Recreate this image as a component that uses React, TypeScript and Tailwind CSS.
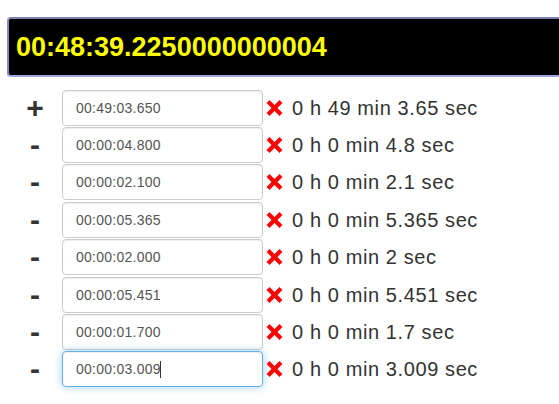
import React from 'react';

const laps = [
  { sign: '+', value: '00:49:03.650', label: '0 h 49 min 3.65 sec' },
  { sign: '-', value: '00:00:04.800', label: '0 h 0 min 4.8 sec' },
  { sign: '-', value: '00:00:02.100', label: '0 h 0 min 2.1 sec' },
  { sign: '-', value: '00:00:05.365', label: '0 h 0 min 5.365 sec' },
  { sign: '-', value: '00:00:02.000', label: '0 h 0 min 2 sec' },
  { sign: '-', value: '00:00:05.451', label: '0 h 0 min 5.451 sec' },
  { sign: '-', value: '00:00:01.700', label: '0 h 0 min 1.7 sec' },
  { sign: '-', value: '00:00:03.009', label: '0 h 0 min 3.009 sec', focused: true },
];

function RemoveIcon() {
  return (
    <svg width="17" height="16" viewBox="0 0 17 16" className="shrink-0">
      <path d="M3.5 3 L13.5 13 M13.5 3 L3.5 13" stroke="#ff0000" strokeWidth="4.2" strokeLinecap="square" />
    </svg>
  );
}

export default function App() {
  return (
    <div className="w-[559px] h-[404px] overflow-hidden bg-white font-['Liberation_Sans',Arial,sans-serif]">
      {/* Total display */}
      <div className="pt-[17px] pl-[7px]">
        <div className="w-[580px] h-[60px] bg-black rounded-[4px] border-2 border-t-[#7f7fae] border-l-[#8a8ab8] border-b-[#a3a3e0] border-r-[#8a8ab8] flex items-center pl-[7px]">
          <span className="text-[27px] font-bold text-[#ffff00] leading-none">00:48:39.2250000000004</span>
        </div>
      </div>

      {/* Laps */}
      <div className="pt-[12px] flex flex-col">
        {laps.map((lap, i) => (
          <div key={i} className="flex items-center h-[37.4px]">
            <div className="w-[62px] pl-[8px] flex justify-center">
              <span className="text-[30px] font-bold text-[#333] leading-none">{lap.sign}</span>
            </div>
            <div className="relative">
              <input
                readOnly
                value={lap.value}
                className={`w-[201px] h-[36px] px-[13px] rounded-[4px] text-[14px] tracking-[0.25px] text-[#555] bg-white outline-none border ${
                  lap.focused
                    ? 'border-[#66afe9] shadow-[inset_0_1px_1px_rgba(0,0,0,.075),0_0_8px_rgba(102,175,233,.6)]'
                    : 'border-[#ccc] shadow-[inset_0_1px_1px_rgba(0,0,0,.075)]'
                }`}
              />
              {lap.focused && <div className="absolute left-[98px] top-[10px] w-px h-[17px] bg-[#333]" />}
            </div>
            <div className="ml-[3px] flex items-center">
              <RemoveIcon />
              <span className="ml-[9px] text-[20px] tracking-[0.6px] text-[#333] leading-none">{lap.label}</span>
            </div>
          </div>
        ))}
      </div>
    </div>
  );
}
